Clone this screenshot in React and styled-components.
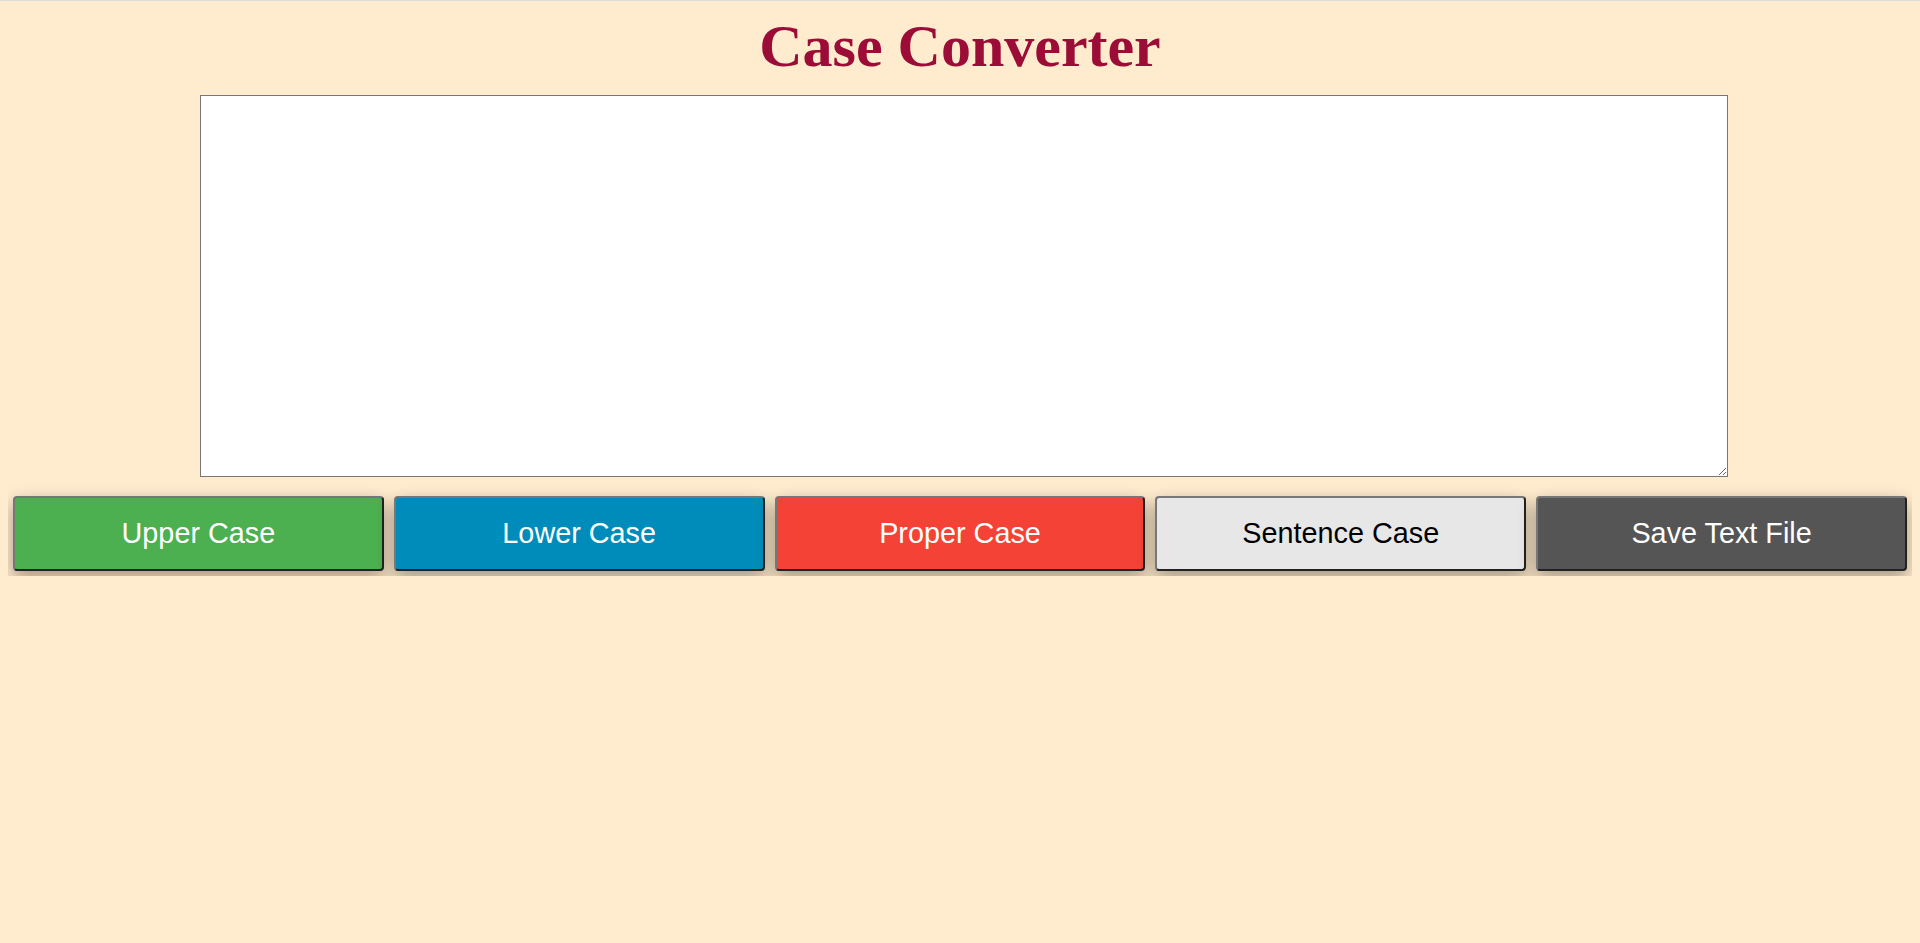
import React, { useState } from 'react';
import styled, { createGlobalStyle } from 'styled-components';

const GlobalStyle = createGlobalStyle`
  html {
    border-top: 1px solid #dcdcdc;
  }
  body {
    margin: 8px;
    background: blanchedalmond;
    font-family: "Liberation Sans", Arial, sans-serif;
  }
`;

const Page = styled.main`
  display: flex;
  flex-direction: column;
  align-items: stretch;
`;

const Title = styled.h1`
  margin: 3px 0 14px;
  text-align: center;
  font-family: "Liberation Serif", "Times New Roman", serif;
  font-weight: bold;
  font-size: 60px;
  line-height: normal;
  color: #9b0d37;
`;

const EditorWrap = styled.div`
  display: flex;
  justify-content: center;
  padding-left: 8px;
`;

const Editor = styled.textarea`
  box-sizing: border-box;
  width: 1528px;
  height: 382px;
  padding: 2px;
  border: 1px solid #767676;
  background: #fff;
  font-family: "Liberation Mono", monospace;
  font-size: 13px;
  outline: none;
`;

const ButtonRow = styled.div`
  display: flex;
  margin-top: 14px;
`;

const CaseButton = styled.button`
  flex: 1;
  margin: 5px;
  height: 75px;
  border: 2px solid;
  border-color: #777 #222 #222 #777;
  border-radius: 4px;
  background: ${({ $bg }) => $bg};
  color: ${({ $fg }) => $fg || '#fff'};
  font-family: "Liberation Sans", Arial, sans-serif;
  font-size: 28.8px;
  cursor: pointer;
  box-shadow: 0 8px 16px 0 rgba(0, 0, 0, 0.2), 0 6px 20px 0 rgba(0, 0, 0, 0.19);
`;

const buttons = [
  { label: 'Upper Case', bg: '#4caf50' },
  { label: 'Lower Case', bg: '#008cba' },
  { label: 'Proper Case', bg: '#f44336' },
  { label: 'Sentence Case', bg: '#e7e7e7', fg: '#000' },
  { label: 'Save Text File', bg: '#555555' },
];

export default function App() {
  const [text, setText] = useState('');

  const convert = (label) => {
    if (label === 'Upper Case') setText(text.toUpperCase());
    else if (label === 'Lower Case') setText(text.toLowerCase());
    else if (label === 'Proper Case')
      setText(text.toLowerCase().replace(/\b\w/g, (c) => c.toUpperCase()));
    else if (label === 'Sentence Case')
      setText(text.toLowerCase().replace(/(^\s*\w|[.!?]\s+\w)/g, (c) => c.toUpperCase()));
  };

  return (
    <>
      <GlobalStyle />
      <Page>
        <Title>Case Converter</Title>
        <EditorWrap>
          <Editor value={text} onChange={(e) => setText(e.target.value)} />
        </EditorWrap>
        <ButtonRow>
          {buttons.map((b) => (
            <CaseButton key={b.label} $bg={b.bg} $fg={b.fg} onClick={() => convert(b.label)}>
              {b.label}
            </CaseButton>
          ))}
        </ButtonRow>
      </Page>
    </>
  );
}
